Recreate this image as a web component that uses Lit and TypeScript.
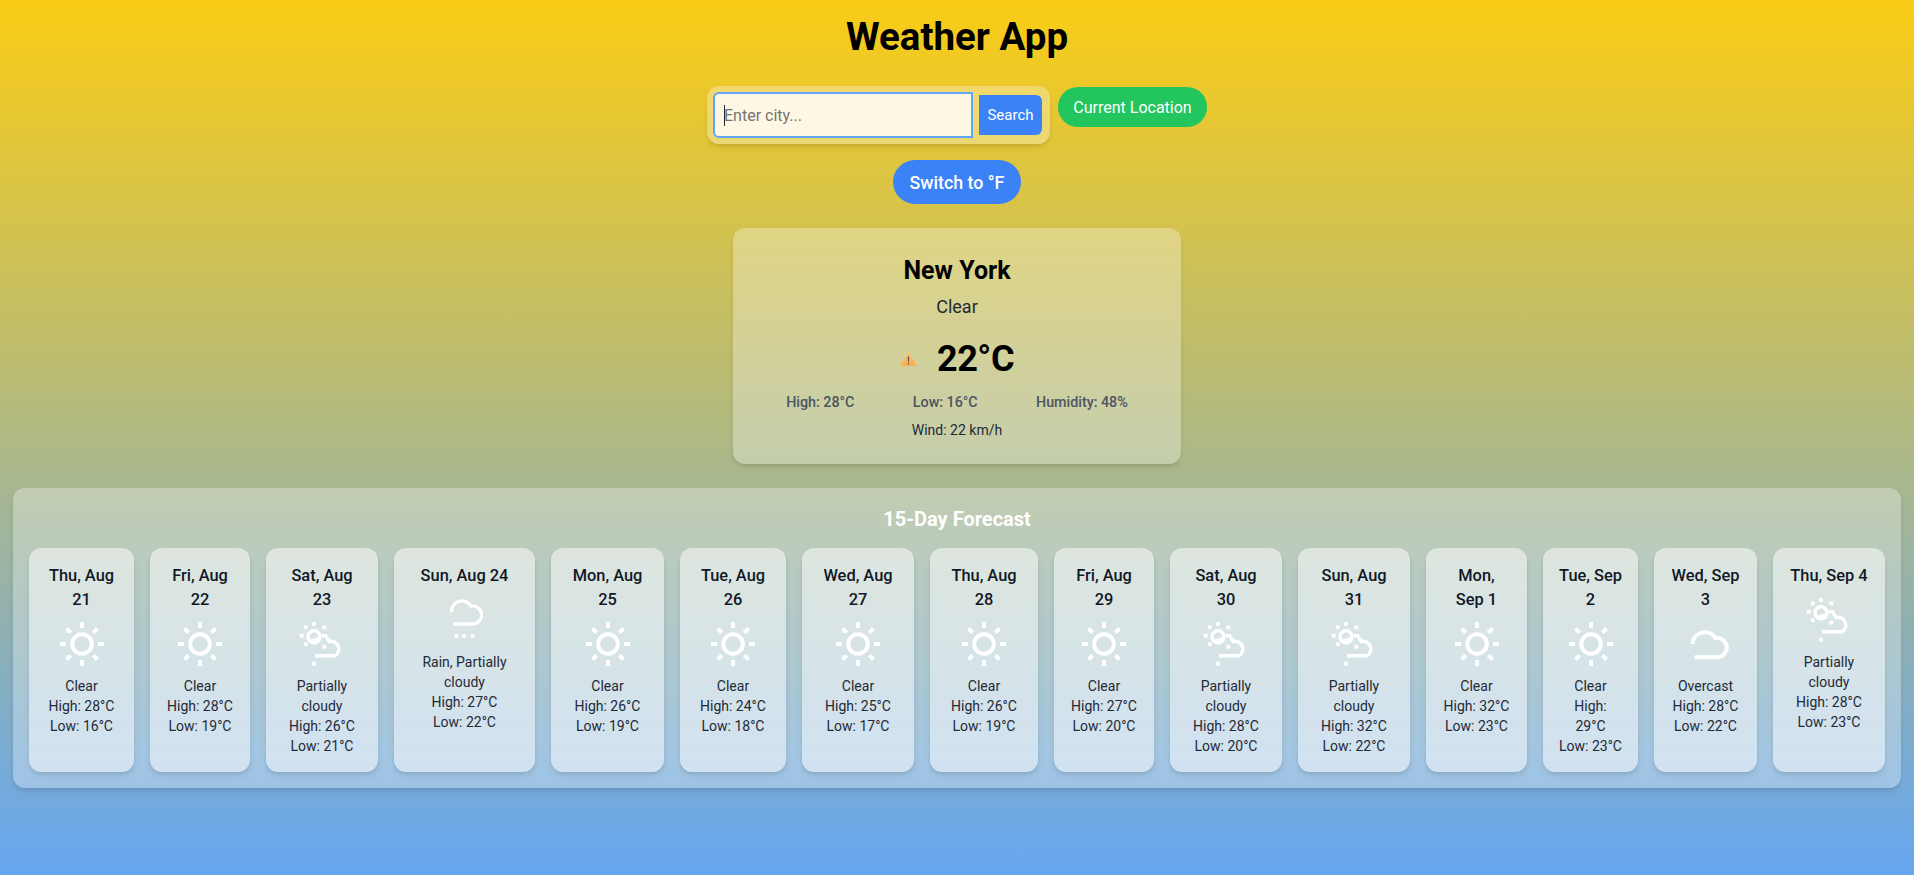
import { LitElement, html, css, svg } from 'lit';
import { customElement } from 'lit/decorators.js';

type Day = { date: string; icon: string; text: string };

const days: Day[] = [
  { date: 'Thu, Aug\n21', icon: 'sun', text: 'Clear\nHigh: 28°C\nLow: 16°C' },
  { date: 'Fri, Aug\n22', icon: 'sun', text: 'Clear\nHigh: 28°C\nLow: 19°C' },
  { date: 'Sat, Aug\n23', icon: 'partly', text: 'Partially\ncloudy\nHigh: 26°C\nLow: 21°C' },
  { date: 'Sun, Aug 24', icon: 'rain', text: 'Rain, Partially\ncloudy\nHigh: 27°C\nLow: 22°C' },
  { date: 'Mon, Aug\n25', icon: 'sun', text: 'Clear\nHigh: 26°C\nLow: 19°C' },
  { date: 'Tue, Aug\n26', icon: 'sun', text: 'Clear\nHigh: 24°C\nLow: 18°C' },
  { date: 'Wed, Aug\n27', icon: 'sun', text: 'Clear\nHigh: 25°C\nLow: 17°C' },
  { date: 'Thu, Aug\n28', icon: 'sun', text: 'Clear\nHigh: 26°C\nLow: 19°C' },
  { date: 'Fri, Aug\n29', icon: 'sun', text: 'Clear\nHigh: 27°C\nLow: 20°C' },
  { date: 'Sat, Aug\n30', icon: 'partly', text: 'Partially\ncloudy\nHigh: 28°C\nLow: 20°C' },
  { date: 'Sun, Aug\n31', icon: 'partly', text: 'Partially\ncloudy\nHigh: 32°C\nLow: 22°C' },
  { date: 'Mon,\nSep 1', icon: 'sun', text: 'Clear\nHigh: 32°C\nLow: 23°C' },
  { date: 'Tue, Sep\n2', icon: 'sun', text: 'Clear\nHigh:\n29°C\nLow: 23°C' },
  { date: 'Wed, Sep\n3', icon: 'cloud', text: 'Overcast\nHigh: 28°C\nLow: 22°C' },
  { date: 'Thu, Sep 4', icon: 'partly', text: 'Partially\ncloudy\nHigh: 28°C\nLow: 23°C' },
];

const squares = (pts: number[][], s: number) =>
  pts.map(([x, y]) => svg`<rect x=${x - s / 2} y=${y - s / 2} width=${s} height=${s}></rect>`);

const icons: Record<string, unknown> = {
  sun: svg`
    <circle class="line" cx="24" cy="24" r="9.8"></circle>
    <path class="line" d="M24 2v6M24 40v6M2 24h6M40 24h6M8.5 8.5l4.2 4.2M35.3 35.3l4.2 4.2M8.5 39.5l4.2-4.2M35.3 12.7l4.2-4.2"></path>`,
  partly: svg`
    <circle class="line thin" cx="16" cy="16.7" r="6"></circle>
    <path class="line thin" d="M12 21.5l10-3"></path>
    <path class="line thin" d="M24 15.7h3.5l3.5 5.8A7.8 7.8 0 0 1 37 35.7H17"></path>
    ${squares([[16, 4], [3.7, 15.7], [7.7, 7.3], [26.3, 7.3], [7.7, 24.3], [26.3, 26.7], [16, 43.7]], 3.8)}`,
  rain: svg`
    <path class="line thin" d="M10.5 16a10.5 10.5 0 0 1 19.5-6a9 9 0 0 1 3 18H12"></path>
    ${squares([[15.5, 40], [23, 40], [31.5, 40]], 3.6)}`,
  cloud: svg`<path class="line" d="M10.5 24a12.5 12.5 0 0 1 23-6a9.7 9.7 0 0 1 3 19.3H12.5"></path>`,
};

@customElement('app-root')
export class AppRoot extends LitElement {
  static styles = css`
    :host {
      display: block;
      min-height: 875px;
      background: linear-gradient(to bottom, #facc15 0, #60a5fa 910px);
      font-family: Roboto, 'Open Sans', sans-serif;
      color: #000;
    }
    .page {
      display: flex;
      flex-direction: column;
      align-items: center;
      padding: 17px 13px 0;
    }
    h1 {
      margin: 0 0 29px;
      font-size: 38.5px;
      line-height: 40px;
      font-weight: 700;
    }
    .controls {
      display: flex;
      align-items: flex-start;
      gap: 8px;
    }
    .search {
      position: relative;
      display: flex;
      align-items: center;
      gap: 6px;
      padding: 6px 8px 6px 6px;
      border-radius: 12px;
      background: rgba(255, 255, 255, 0.3);
      box-shadow: 0 4px 6px -1px rgba(0, 0, 0, 0.1), 0 2px 4px -2px rgba(0, 0, 0, 0.1);
    }
    .caret {
      position: absolute;
      left: 17px;
      top: 19px;
      width: 1px;
      height: 21px;
      background: #1f2937;
    }
    input {
      box-sizing: border-box;
      width: 260px;
      height: 46px;
      padding: 0 9px;
      border: 2px solid #60a5fa;
      border-radius: 6px 0 0 6px;
      outline: none;
      background: #fef7e3;
      font: 400 16px Roboto, sans-serif;
      color: #111827;
    }
    button {
      border: none;
      color: #fff;
      font-family: inherit;
    }
    .search button {
      width: 63px;
      height: 40px;
      padding: 0;
      border-radius: 0 6px 6px 0;
      background: #3b82f6;
      font-size: 15px;
    }
    .location {
      height: 40px;
      width: 149px;
      margin-top: 1px;
      border-radius: 999px;
      background: #22c55e;
      font-size: 16px;
    }
    .unit {
      width: 128px;
      height: 44px;
      margin: 16px 0 24px;
      border-radius: 999px;
      background: #3b82f6;
      font-size: 17.8px;
      font-weight: 500;
    }
    .now {
      box-sizing: border-box;
      width: 448px;
      height: 236px;
      padding: 25px 24px 24px;
      border-radius: 12px;
      background: rgba(255, 255, 255, 0.3);
      box-shadow: 0 4px 6px -1px rgba(0, 0, 0, 0.1), 0 2px 4px -2px rgba(0, 0, 0, 0.1);
      text-align: center;
    }
    .now h2 {
      margin: 0 0 4px;
      font-size: 25px;
      line-height: 36px;
      font-weight: 700;
    }
    .desc {
      font-size: 18px;
      line-height: 28px;
      color: #1f2937;
    }
    .temp {
      display: flex;
      align-items: center;
      justify-content: center;
      gap: 20px;
      margin: 18px 0 13px;
      font-size: 36px;
      line-height: 40px;
      font-weight: 700;
      letter-spacing: -0.5px;
    }
    .temp svg {
      width: 17px;
      height: 16px;
    }
    .stats {
      display: flex;
      justify-content: space-around;
      margin-bottom: 8px;
      font-size: 14.3px;
      line-height: 20px;
      font-weight: 500;
      color: #4b5563;
    }
    .wind {
      font-size: 14px;
      line-height: 20px;
      color: #1f2937;
    }
    .forecast {
      box-sizing: border-box;
      width: 100%;
      height: 300px;
      margin-top: 24px;
      padding: 16px;
      border-radius: 12px;
      background: rgba(255, 255, 255, 0.3);
      box-shadow: 0 4px 6px -1px rgba(0, 0, 0, 0.1), 0 2px 4px -2px rgba(0, 0, 0, 0.1);
    }
    .forecast h3 {
      margin: 0 0 15px;
      padding-top: 1px;
      font-size: 20px;
      line-height: 28px;
      font-weight: 700;
      color: #fff;
      text-align: center;
    }
    .days {
      display: grid;
      grid-template-columns: 105px 100px 112px 141px 113px 106px 112px 108px 100px 112px 112px 101px 95px 103px 112px;
      gap: 16px;
    }
    .day {
      box-sizing: border-box;
      height: 224px;
      padding: 16px 6px;
      border-radius: 12px;
      background: rgba(255, 255, 255, 0.5);
      box-shadow: 0 4px 6px -1px rgba(0, 0, 0, 0.1), 0 2px 4px -2px rgba(0, 0, 0, 0.1);
      text-align: center;
    }
    .date {
      font-size: 16.4px;
      line-height: 24px;
      font-weight: 500;
      color: #111827;
      white-space: pre;
    }
    .day svg {
      display: block;
      width: 48px;
      height: 48px;
      margin: 8px auto;
      fill: #fff;
    }
    .line {
      fill: none;
      stroke: #fff;
      stroke-width: 4;
    }
    .thin {
      stroke-width: 3.4;
    }
    .info {
      font-size: 14px;
      line-height: 20px;
      color: #1f2937;
      white-space: pre;
    }
  `;

  firstUpdated() {
    this.renderRoot.querySelector('input')?.focus();
  }

  render() {
    return html`
      <div class="page">
        <h1>Weather App</h1>
        <div class="controls">
          <div class="search">
            <input type="text" placeholder="Enter city..." />
            <span class="caret"></span>
            <button>Search</button>
          </div>
          <button class="location">Current Location</button>
        </div>
        <button class="unit">Switch to °F</button>
        <section class="now">
          <h2>New York</h2>
          <div class="desc">Clear</div>
          <div class="temp">
            <svg viewBox="0 0 17 16">
              <defs>
                <linearGradient id="warn" x1="0" y1="0" x2="0" y2="1">
                  <stop offset="0" stop-color="#f9c36b"></stop>
                  <stop offset="1" stop-color="#fdad50"></stop>
                </linearGradient>
              </defs>
              <path d="M8.5 1 17 15H0Z" fill="url(#warn)"></path>
              <path d="M7.8 5.5h1.4l-.2 5.5H8ZM7.8 12h1.4v1.5H7.8Z" fill="#5b5560"></path>
            </svg>
            <span>22°C</span>
          </div>
          <div class="stats">
            <span>High: 28°C</span>
            <span>Low: 16°C</span>
            <span>Humidity: 48%</span>
          </div>
          <div class="wind">Wind: 22 km/h</div>
        </section>
        <section class="forecast">
          <h3>15-Day Forecast</h3>
          <div class="days">
            ${days.map(
              (d) => html`
                <div class="day">
                  <div class="date">${d.date}</div>
                  <svg viewBox="0 0 48 48">${icons[d.icon]}</svg>
                  <div class="info">${d.text}</div>
                </div>
              `
            )}
          </div>
        </section>
      </div>
    `;
  }
}
